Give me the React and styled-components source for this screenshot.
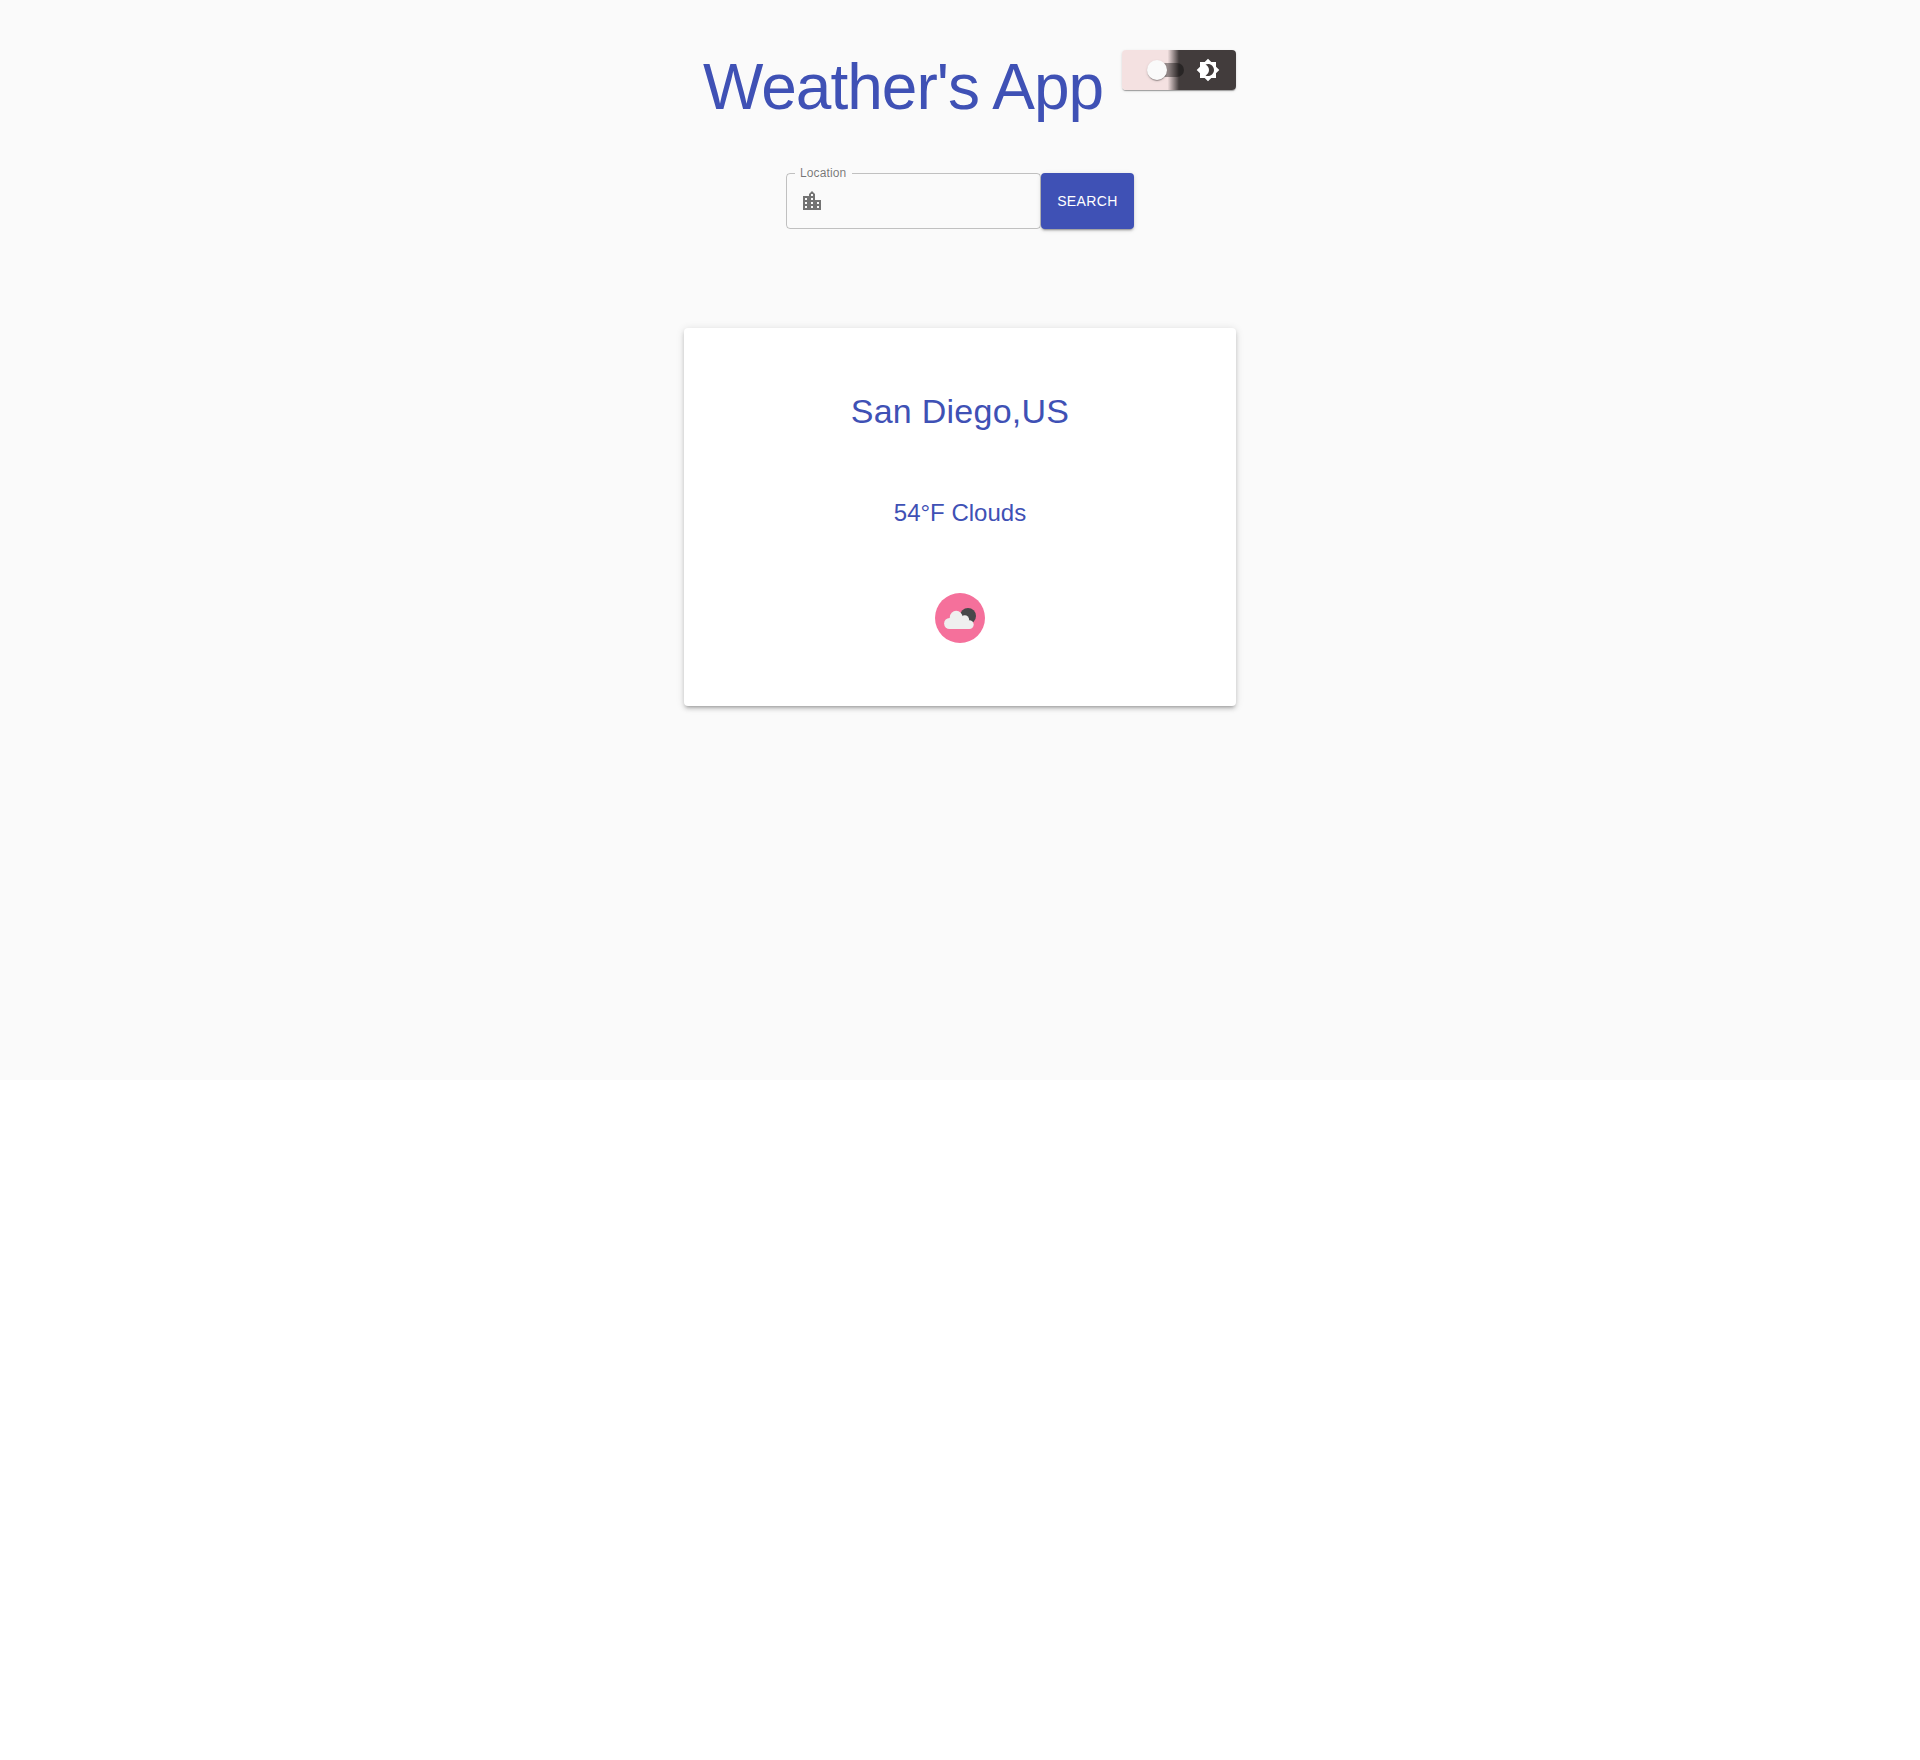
import React from "react";
import styled, { createGlobalStyle } from "styled-components";

const GlobalStyle = createGlobalStyle`
  *, *::before, *::after { box-sizing: border-box; }
  html { background: #fff; }
  body {
    margin: 0;
    font-family: "Liberation Sans", Arial, sans-serif;
    font-size: 16px;
    color: rgba(0, 0, 0, 0.87);
  }
`;

const Page = styled.div`
  height: 1080px;
  padding-top: 50px;
  background: #fafafa;
  display: flex;
  flex-direction: column;
  align-items: center;
`;

const Header = styled.header`
  width: 552px;
  display: flex;
  align-items: flex-start;
  justify-content: space-between;
`;

const Title = styled.h1`
  margin: 0;
  padding-left: 19px;
  font-size: 64px;
  font-weight: 400;
  line-height: 75px;
  letter-spacing: -0.01562em;
  white-space: nowrap;
  color: #3f51b5;
`;

const ThemeToggle = styled.div`
  width: 114px;
  height: 40px;
  padding-left: 16px;
  border-radius: 4px;
  display: flex;
  align-items: center;
  background: linear-gradient(90deg, #f4e1e1 40%, #423c3c 50%);
  box-shadow: 0 2px 1px -1px rgba(0, 0, 0, 0.2), 0 1px 1px 0 rgba(0, 0, 0, 0.14),
    0 1px 3px 0 rgba(0, 0, 0, 0.12);
`;

const Switch = styled.button.attrs({ type: "button", role: "switch", "aria-checked": false })`
  width: 58px;
  height: 38px;
  padding: 12px;
  border: 0;
  background: none;
  display: flex;
`;

const Track = styled.span`
  width: 34px;
  height: 14px;
  border-radius: 7px;
  display: flex;
  align-items: center;
  background: rgba(0, 0, 0, 0.38);
`;

const Thumb = styled.span`
  flex: none;
  width: 20px;
  height: 20px;
  margin-left: -3px;
  border-radius: 50%;
  background: #fafafa;
  box-shadow: 0 2px 1px -1px rgba(0, 0, 0, 0.2), 0 1px 1px 0 rgba(0, 0, 0, 0.14),
    0 1px 3px 0 rgba(0, 0, 0, 0.12);
`;

const Icon = styled.svg`
  flex: none;
  width: 24px;
  height: 24px;
  fill: ${(p) => p.$color};
`;

const SearchForm = styled.form`
  margin-top: 48px;
  height: 56px;
  display: flex;
`;

const Field = styled.fieldset`
  width: 255px;
  height: 61px;
  margin: -5px 0 0;
  padding: 0 13px;
  min-width: 0;
  border: 1px solid rgba(0, 0, 0, 0.23);
  border-radius: 4px;
`;

const Label = styled.legend`
  height: 11px;
  margin-left: -5px;
  padding: 0 6px 0 5px;
  font-size: 12px;
  line-height: 11px;
  letter-spacing: 0.00938em;
  color: rgba(0, 0, 0, 0.54);
`;

const InputRow = styled.div`
  height: 44px;
  display: flex;
  align-items: center;
  gap: 8px;
`;

const Input = styled.input`
  flex: 1;
  min-width: 0;
  padding: 0;
  border: 0;
  outline: 0;
  background: none;
  font: inherit;
`;

const SearchButton = styled.button`
  width: 93px;
  height: 56px;
  padding: 0;
  border: 0;
  border-radius: 4px;
  font-family: inherit;
  font-size: 14px;
  font-weight: 500;
  letter-spacing: 0.02857em;
  color: #fff;
  background: #3f51b5;
  box-shadow: 0 3px 1px -2px rgba(0, 0, 0, 0.2), 0 2px 2px 0 rgba(0, 0, 0, 0.14),
    0 1px 5px 0 rgba(0, 0, 0, 0.12);
`;

const Card = styled.main`
  width: 552px;
  height: 378px;
  margin-top: 99px;
  border-radius: 4px;
  display: flex;
  flex-direction: column;
  align-items: center;
  background: #fff;
  box-shadow: 0 3px 3px -2px rgba(0, 0, 0, 0.2), 0 3px 4px 0 rgba(0, 0, 0, 0.14),
    0 1px 8px 0 rgba(0, 0, 0, 0.12);
`;

const City = styled.h2`
  margin: 62px 0 0;
  font-size: 34px;
  font-weight: 400;
  line-height: 42px;
  letter-spacing: 0.00735em;
  color: #3f51b5;
`;

const Conditions = styled.p`
  margin: 65px 0 0;
  font-size: 24px;
  line-height: 32px;
  color: #3f51b5;
`;

const WeatherIcon = styled.svg`
  width: 50px;
  height: 50px;
  margin-top: 64px;
`;

export default function App() {
  return (
    <>
      <GlobalStyle />
      <Page>
        <Header>
          <Title>Weather's App</Title>
          <ThemeToggle>
            <Switch aria-label="Dark mode">
              <Track><Thumb /></Track>
            </Switch>
            <Icon $color="#fff" viewBox="0 0 24 24" aria-hidden="true">
              <path d="M20 8.69V4h-4.69L12 .69 8.69 4H4v4.69L.69 12 4 15.31V20h4.69L12 23.31 15.31 20H20v-4.69L23.31 12 20 8.69zM12 18c-.89 0-1.74-.2-2.5-.55C11.56 16.5 13 14.42 13 12s-1.44-4.5-3.5-5.45C10.26 6.2 11.11 6 12 6c3.31 0 6 2.69 6 6s-2.69 6-6 6z" />
            </Icon>
          </ThemeToggle>
        </Header>
        <SearchForm onSubmit={(e) => e.preventDefault()}>
          <Field>
            <Label>Location</Label>
            <InputRow>
              <Icon $color="rgba(0, 0, 0, 0.54)" viewBox="0 0 24 24" aria-hidden="true">
                <path d="M15 11V5l-3-3-3 3v2H3v14h18V11h-6zm-8 8H5v-2h2v2zm0-4H5v-2h2v2zm0-4H5V9h2v2zm6 8h-2v-2h2v2zm0-4h-2v-2h2v2zm0-4h-2V9h2v2zm0-4h-2V5h2v2zm6 12h-2v-2h2v2zm0-4h-2v-2h2v2z" />
              </Icon>
              <Input aria-label="Location" />
            </InputRow>
          </Field>
          <SearchButton>SEARCH</SearchButton>
        </SearchForm>
        <Card>
          <City>San Diego,US</City>
          <Conditions>54°F Clouds</Conditions>
          <WeatherIcon viewBox="0 0 50 50" aria-hidden="true">
            <circle cx="25" cy="25" r="25" fill="#f5709b" />
            <circle cx="33" cy="23" r="8" fill="#48484a" />
            <g fill="#efefef">
              <circle cx="14.6" cy="30.5" r="5.5" />
              <circle cx="21.2" cy="24.2" r="6.4" />
              <circle cx="29.8" cy="26.5" r="4.3" />
              <circle cx="34.3" cy="31.6" r="4.4" />
              <path d="M14.6 25.5h14l5.7 3V36H14.6z" />
            </g>
          </WeatherIcon>
        </Card>
      </Page>
    </>
  );
}
